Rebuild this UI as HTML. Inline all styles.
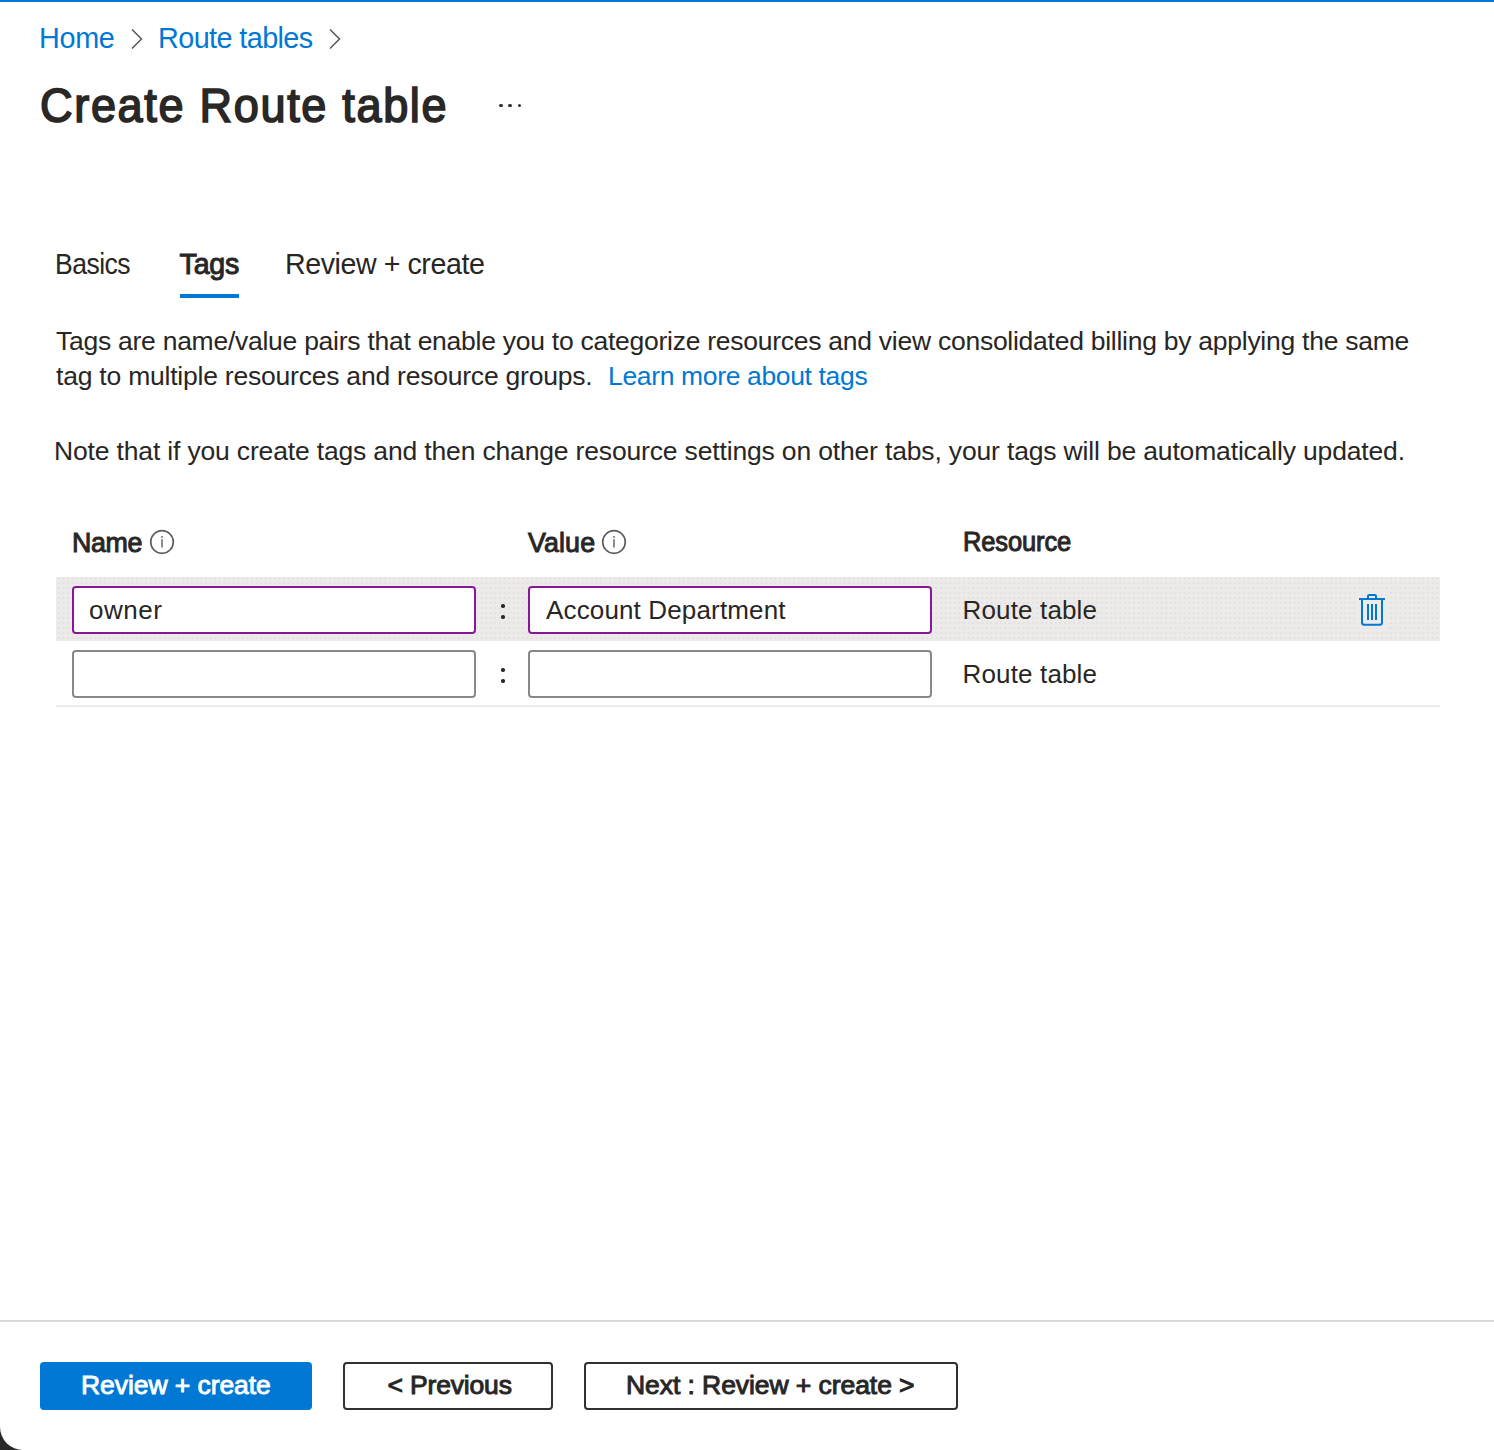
<!DOCTYPE html>
<html>
<head>
<meta charset="utf-8">
<style>
html, body { margin:0; padding:0; }
body { width:1494px; height:1450px; overflow:hidden; background:#282828; position:relative;
  font-family:"Liberation Sans", sans-serif; color:#272625; }
#page { position:absolute; left:0; top:0; width:1494px; height:1450px; background:#fff; border-bottom-left-radius:23px; overflow:hidden; }
.abs { position:absolute; white-space:nowrap; line-height:1; }
#topbar { position:absolute; left:0; top:0; width:1494px; height:2px; background:#0078d4; }
.link { color:#0078d4; }
.chev { position:absolute; }
</style>
</head>
<body>
<div id="page">
  <div id="topbar"></div>

  <!-- breadcrumb -->
  <div id="bc_home" class="abs link" style="left: 39px; top: 24px; font-size: 28.8px; letter-spacing: -0.333px;">Home</div>
  <svg class="chev" style="left:130px; top:28px;" width="14" height="22" viewBox="0 0 14 22"><path d="M2 1.5 L11.5 11 L2 20.5" fill="none" stroke="#605e5c" stroke-width="1.6"/></svg>
  <div id="bc_rt" class="abs link" style="left: 158px; top: 24px; font-size: 28.8px; letter-spacing: -0.591px;">Route tables</div>
  <svg class="chev" style="left:328px; top:28px;" width="14" height="22" viewBox="0 0 14 22"><path d="M2 1.5 L11.5 11 L2 20.5" fill="none" stroke="#605e5c" stroke-width="1.6"/></svg>

  <!-- title -->
  <div id="title" class="abs" style="left: 40px; top: 81px; font-size: 48.5px; -webkit-text-stroke: 1.7px rgb(41, 40, 39); color: rgb(41, 40, 39); letter-spacing: 1.771px; transform: scaleX(0.93); transform-origin: 0px 0px;">Create Route table</div>
  <div class="abs" style="left:499.3px; top:104px; width:3.4px; height:3.4px; border-radius:50%; background:#323130;"></div>
  <div class="abs" style="left:508.3px; top:104px; width:3.4px; height:3.4px; border-radius:50%; background:#323130;"></div>
  <div class="abs" style="left:517.5px; top:104px; width:3.4px; height:3.4px; border-radius:50%; background:#323130;"></div>

  <!-- tabs -->
  <div id="tab1" class="abs" style="left: 55px; top: 249.5px; font-size: 28.6px; letter-spacing: -0.6px; transform: scaleX(0.93); transform-origin: 0 0;">Basics</div>
  <div id="tab2" class="abs" style="left: 179.5px; top: 249.5px; font-size: 28.6px; -webkit-text-stroke: 1px rgb(41, 40, 39); letter-spacing: -0.165px;">Tags</div>
  <div id="tab3" class="abs" style="left: 285px; top: 249.5px; font-size: 28.6px; letter-spacing: -0.429px;">Review + create</div>
  <div class="abs" style="left:180px; top:294px; width:59px; height:4px; background:#0078d4;"></div>

  <!-- description -->
  <div id="d1" class="abs" style="left: 56px; top: 327.5px; font-size: 26.5px; letter-spacing: -0.261px;">Tags are name/value pairs that enable you to categorize resources and view consolidated billing by applying the same</div>
  <div id="d2" class="abs" style="left: 56px; top: 362.5px; font-size: 26.5px; letter-spacing: -0.219px;">tag to multiple resources and resource groups.</div>
  <div id="d2l" class="abs link" style="left: 608px; top: 362.5px; font-size: 26.5px; letter-spacing: -0.35px;">Learn more about tags</div>
  <div id="d3" class="abs" style="left: 54px; top: 438px; font-size: 26.5px; letter-spacing: -0.162px;">Note that if you create tags and then change resource settings on other tabs, your tags will be automatically updated.</div>

  <!-- table headers -->
  <div id="h_name" class="abs" style="left: 72px; top: 530px; font-size: 26.8px; -webkit-text-stroke: 1px rgb(41, 40, 39); letter-spacing: -0.331px;">Name</div>
  <svg class="abs" style="left:149px; top:529px;" width="26" height="26" viewBox="0 0 26 26"><circle cx="13" cy="13" r="11.3" fill="none" stroke="#5f5e5c" stroke-width="1.7"/><rect x="12.15" y="10.2" width="1.7" height="8.3" fill="#7a7876"/><rect x="12.15" y="7.2" width="1.7" height="1.6" fill="#6a6866"/></svg>
  <div id="h_value" class="abs" style="left: 528px; top: 530px; font-size: 26.8px; -webkit-text-stroke: 1px rgb(41, 40, 39); letter-spacing: 0.125px;">Value</div>
  <svg class="abs" style="left:601px; top:529px;" width="26" height="26" viewBox="0 0 26 26"><circle cx="13" cy="13" r="11.3" fill="none" stroke="#5f5e5c" stroke-width="1.7"/><rect x="12.15" y="10.2" width="1.7" height="8.3" fill="#7a7876"/><rect x="12.15" y="7.2" width="1.7" height="1.6" fill="#6a6866"/></svg>
  <div id="h_res" class="abs" style="left: 963px; top: 529px; font-size: 26.8px; -webkit-text-stroke: 1px rgb(41, 40, 39); letter-spacing: -0.113px; transform: scaleX(0.95); transform-origin: 0px 0px;">Resource</div>

  <!-- row 1 -->
  <div class="abs" style="left:56px; top:577px; width:1384px; height:64px; background-color:#edebe9; background-image:radial-gradient(circle at 1px 1px, rgba(0,0,0,0.045) 0.7px, transparent 1px); background-size:4.6px 5px; background-position:2px 5px;"></div>
  <div class="abs" style="left:72px; top:586px; width:400px; height:44px; border:2px solid #881798; border-radius:4px; background:#fff;"></div>
  <div id="r1_name" class="abs" style="left: 89px; top: 596.5px; font-size: 26px; letter-spacing: 0.5px;">owner</div>
  <div class="abs colon" style="left:501.2px; top:604.3px; width:3.4px; height:3.4px; border-radius:50%; background:#292827;"></div>
  <div class="abs colon" style="left:501.2px; top:615.3px; width:3.4px; height:3.4px; border-radius:50%; background:#292827;"></div>
  <div class="abs" style="left:528px; top:586px; width:400px; height:44px; border:2px solid #881798; border-radius:4px; background:#fff;"></div>
  <div id="r1_val" class="abs" style="left: 546px; top: 596.5px; font-size: 26px; letter-spacing: 0.146px;">Account Department</div>
  <div id="r1_res" class="abs" style="left: 962.5px; top: 597px; font-size: 26px; letter-spacing: 0.15px;">Route table</div>
  <svg class="abs" style="left:1356px; top:592px;" width="32" height="36" viewBox="0 0 32 36">
    <rect x="1" y="0" width="30" height="36" fill="#edebe9"/>
    <g fill="none" stroke="#0078d4" stroke-width="2">
      <path d="M3 7 H29"/>
      <path d="M12 7 V4.2 Q12 3 13.2 3 H18.8 Q20 3 20 4.2 V7"/>
      <path d="M6 7 V30.6 Q6 32.8 8.2 32.8 H23.8 Q26 32.8 26 30.6 V7"/>
      <path d="M12 12 V28 M16 12 V28 M20 12 V28"/>
    </g>
  </svg>

  <!-- row 2 -->
  <div class="abs" style="left:72px; top:650px; width:400px; height:44px; border:2px solid #8a8886; border-radius:4px; background:#fff;"></div>
  <div class="abs colon" style="left:501.2px; top:668.3px; width:3.4px; height:3.4px; border-radius:50%; background:#292827;"></div>
  <div class="abs colon" style="left:501.2px; top:679.3px; width:3.4px; height:3.4px; border-radius:50%; background:#292827;"></div>
  <div class="abs" style="left:528px; top:650px; width:400px; height:44px; border:2px solid #8a8886; border-radius:4px; background:#fff;"></div>
  <div id="r2_res" class="abs" style="left: 962.5px; top: 660.5px; font-size: 26px; letter-spacing: 0.15px;">Route table</div>
  <div class="abs" style="left:56px; top:705px; width:1384px; height:2px; background:#edebe9;"></div>

  <!-- footer -->
  <div class="abs" style="left:0px; top:1320px; width:1494px; height:2px; background:#dcdad8;"></div>
  <div class="abs" style="left:40px; top:1362px; width:272px; height:48px; background:#0078d4; border-radius:4px;"></div>
  <div id="b1" class="abs" style="left: 81px; top: 1372px; font-size: 26.5px; -webkit-text-stroke: 0.9px #fff; color: rgb(255, 255, 255); letter-spacing: -0.071px;">Review + create</div>
  <div class="abs" style="left:343px; top:1362px; width:206px; height:44px; border:2px solid #323130; border-radius:4px;"></div>
  <div id="b2" class="abs" style="left: 387.5px; top: 1372px; font-size: 26.5px; -webkit-text-stroke: 1px rgb(41, 40, 39); letter-spacing: -0.168px;">&lt; Previous</div>
  <div class="abs" style="left:584px; top:1362px; width:370px; height:44px; border:2px solid #323130; border-radius:4px;"></div>
  <div id="b3" class="abs" style="left: 626px; top: 1372px; font-size: 26.5px; -webkit-text-stroke: 1px rgb(41, 40, 39); letter-spacing: -0.069px;">Next : Review + create &gt;</div>

</div>
</body>
</html>
